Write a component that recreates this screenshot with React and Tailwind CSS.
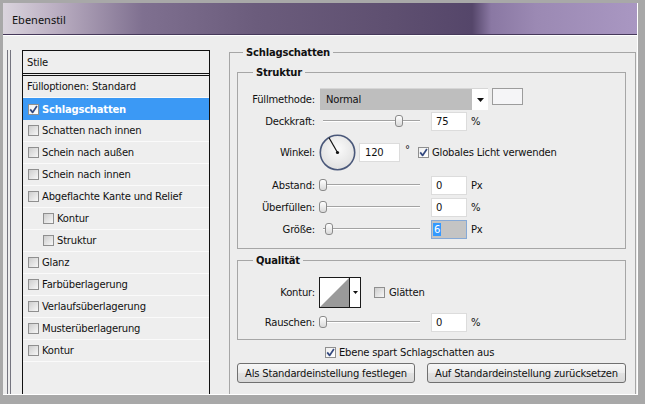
import React from "react";

const Check = ({ checked }) => (
  <span
    className={
      checked
        ? "flex w-[11px] h-[11px] shrink-0 items-center justify-center border border-[#8f8f8f] bg-[linear-gradient(135deg,#f0f0f0,#ffffff)]"
        : "flex w-[11px] h-[11px] shrink-0 items-center justify-center border border-[#8f8f8f] bg-[linear-gradient(135deg,#cdcdcd,#f7f7f7)]"
    }
  >
    {checked && (
      <svg width="9" height="9" viewBox="0 0 9 9">
        <path d="M1.2 4.4 L3.6 7.4 L7.9 1.1" fill="none" stroke="#34497f" strokeWidth="1.7" strokeLinejoin="round" />
      </svg>
    )}
  </span>
);

const Slider = ({ pos }) => (
  <div className="relative w-[104px] h-[14px] shrink-0">
    <div className="absolute left-[3px] right-[4px] top-[6px] h-[2px] border-t border-[#a3a3a3] border-b border-b-white" />
    <div
      className="absolute top-[1px] w-[8px] h-[12px] rounded-[3px] border border-[#8a8a8a] bg-[linear-gradient(#ffffff,#d9d9d9)]"
      style={{ left: pos }}
    />
  </div>
);

const Input = ({ v, wide }) => (
  <div
    className={
      wide
        ? "w-[41px] h-[19px] shrink-0 bg-white border border-[#dcdcdc] flex items-center pl-[5px]"
        : "w-[36px] h-[19px] shrink-0 bg-white border border-[#dcdcdc] flex items-center pl-[4px]"
    }
  >
    {v}
  </div>
);

const Label = ({ children }) => <div className="w-[77px] shrink-0 text-right">{children}</div>;

const SliderRow = ({ label, pos, value, unit, mt }) => (
  <div className={"h-[20px] flex items-center " + mt}>
    <Label>{label}</Label>
    <div className="ml-[5px]">
      <Slider pos={pos} />
    </div>
    <div className="ml-[7px]">
      <Input v={value} />
    </div>
    <div className="ml-[4px]">{unit}</div>
  </div>
);

const items = [
  { t: "Schatten nach innen" },
  { t: "Schein nach außen" },
  { t: "Schein nach innen" },
  { t: "Abgeflachte Kante und Relief" },
  { t: "Kontur", i: true },
  { t: "Struktur", i: true },
  { t: "Glanz" },
  { t: "Farbüberlagerung" },
  { t: "Verlaufsüberlagerung" },
  { t: "Musterüberlagerung" },
  { t: "Kontur" },
];

export default function App() {
  return (
    <div className="w-[645px] h-[404px] bg-[#a8a8a8] pt-[3px] pl-[3px] overflow-hidden font-['DejaVu_Sans',sans-serif] text-[10px] leading-[13px] tracking-[-0.2px] text-[#111]">
      <div className="w-[635px] h-[392px] border-r border-b border-white flex flex-col">
        <div className="h-[32px] shrink-0 border-b border-[#46395a] bg-[linear-gradient(90deg,#dad4dd_0%,#bcb0c3_8%,#7f7090_22%,#6b5c7c_40%,#5e4f70_62%,#55466a_74%,#8a78a3_77%,#9b89b3_84%,#a997c2_100%)] flex items-center pl-[9px] pt-[2px] font-['Noto_Sans',sans-serif] text-[11px] tracking-normal text-[#111]">
          Ebenenstil
        </div>
        <div className="flex-1 min-h-0 border-t border-white bg-[#ededed] flex">
          <div className="w-[19px] shrink-0 flex pt-[14px]">
            <div className="ml-[4px] w-[1px] bg-[#74747e]" />
            <div className="ml-[2px] w-[1px] bg-[#74747e]" />
          </div>

          <div className="mt-[14px] w-[188px] shrink-0 border-x border-t border-[#111] bg-[#eeeeee]">
            <div className="h-[25px] border-b-[3px] border-double border-[#111] pl-[4px] flex items-center">Stile</div>
            <div className="h-[22px] flex items-center border-b border-[#fafafa] pl-[4px]">Fülloptionen: Standard</div>
            <div className="h-[22px] flex items-center bg-[#3b99f5] pl-[5px]">
              <Check checked />
              <span className="ml-[3px] font-bold text-white">Schlagschatten</span>
            </div>
            {items.map((it, k) => (
              <div
                key={k}
                className={
                  it.i
                    ? "h-[22px] flex items-center border-b border-[#fafafa] pl-[20px]"
                    : "h-[22px] flex items-center border-b border-[#fafafa] pl-[5px]"
                }
              >
                <Check />
                <span className="ml-[3px]">{it.t}</span>
              </div>
            ))}
          </div>

          <div className="ml-[19px] mt-[16px] w-[407px] shrink-0 border-x border-t border-[#a6a6a6] flex flex-col">
            <div className="-mt-[7px] ml-[13px] w-fit px-[3px] bg-[#ededed] font-bold h-[13px]">Schlagschatten</div>

            <div className="mt-[13px] ml-[7px] w-[389px] border border-[#a6a6a6] pb-[9px]">
              <div className="-mt-[7px] ml-[15px] w-fit px-[3px] bg-[#ededed] font-bold h-[13px]">Struktur</div>

              <div className="mt-[9px] h-[22px] flex items-center">
                <Label>Füllmethode:</Label>
                <div className="ml-[5px] w-[168px] h-[22px] flex bg-[#bebebe] border-t border-[#d6d6d6]">
                  <div className="flex-1 flex items-center pl-[6px]">Normal</div>
                  <div className="w-[16px] bg-white flex items-center justify-center">
                    <svg width="7" height="4" viewBox="0 0 7 4">
                      <polygon points="0,0 7,0 3.5,4" fill="#111" />
                    </svg>
                  </div>
                </div>
                <div className="ml-[4px] w-[31px] h-[17px] self-start border border-[#9c9c9c] bg-[#f5f5f7]" />
              </div>

              <SliderRow label="Deckkraft:" pos={75} value="75" unit="%" mt="mt-[1px]" />

              <div className="mt-[3px] h-[37px] flex items-center">
                <Label>Winkel:</Label>
                <div className="ml-[4px]">
                  <svg width="37" height="37" viewBox="0 0 37 37">
                    <defs>
                      <radialGradient id="dial" cx="50%" cy="40%" r="60%">
                        <stop offset="0" stopColor="#fbfbfb" />
                        <stop offset="1" stopColor="#e0e0e0" />
                      </radialGradient>
                    </defs>
                    <circle cx="18.5" cy="18.5" r="17.2" fill="url(#dial)" stroke="#4a587a" strokeWidth="1.6" />
                    <line x1="18.5" y1="18.5" x2="10" y2="3.8" stroke="#111" strokeWidth="1.2" />
                    <circle cx="18.5" cy="18.5" r="1.6" fill="#111" />
                  </svg>
                </div>
                <div className="ml-[3px]">
                  <Input v="120" wide />
                </div>
                <div className="ml-[5px] w-[6px] self-start mt-[9px]">°</div>
                <div className="ml-[7px]">
                  <Check checked />
                </div>
                <div className="ml-[3px]">Globales Licht verwenden</div>
              </div>

              <SliderRow label="Abstand:" pos={-1} value="0" unit="Px" mt="mt-[4px]" />
              <SliderRow label="Überfüllen:" pos={-1} value="0" unit="%" mt="mt-[2px]" />

              <div className="mt-[2px] h-[20px] flex items-center">
                <Label>Größe:</Label>
                <div className="ml-[5px]">
                  <Slider pos={5} />
                </div>
                <div className="ml-[7px] w-[36px] h-[19px] shrink-0 bg-[#c4c4c4] border border-[#86a9d6] flex items-center pl-[1px]">
                  <span className="w-[8px] h-[13px] bg-[#3399ff] text-white flex items-center justify-center">6</span>
                </div>
                <div className="ml-[4px]">Px</div>
              </div>
            </div>

            <div className="mt-[11px] ml-[7px] w-[389px] border border-[#a6a6a6] pb-[7px]">
              <div className="-mt-[7px] ml-[15px] w-fit px-[3px] bg-[#ededed] font-bold h-[13px]">Qualität</div>

              <div className="mt-[10px] h-[31px] flex items-center">
                <Label>Kontur:</Label>
                <div className="ml-[4px] w-[42px] h-[31px] border border-[#1a1a1a] flex bg-white">
                  <svg width="29" height="29" viewBox="0 0 29 29">
                    <polygon points="0,29 29,0 29,29" fill="#9a9a9a" />
                  </svg>
                  <div className="w-[11px] border-l border-[#1a1a1a] flex items-center justify-center">
                    <svg width="5" height="3" viewBox="0 0 5 3">
                      <polygon points="0,0 5,0 2.5,3" fill="#111" />
                    </svg>
                  </div>
                </div>
                <div className="ml-[13px]">
                  <Check />
                </div>
                <div className="ml-[4px]">Glätten</div>
              </div>

              <SliderRow label="Rauschen:" pos={-1} value="0" unit="%" mt="mt-[4px]" />
            </div>

            <div className="mt-[2px] h-[20px] flex items-center pl-[95px]">
              <Check checked />
              <span className="ml-[3px]">Ebene spart Schlagschatten aus</span>
            </div>

            <div className="mt-[1px] flex gap-[12px] pl-[7px]">
              <button className="w-[178px] h-[20px] rounded-[3px] border border-[#707070] bg-[linear-gradient(#f7f7f7,#ececec_50%,#e2e2e2_51%,#d8d8d8)]">
                Als Standardeinstellung festlegen
              </button>
              <button className="w-[199px] h-[20px] rounded-[3px] border border-[#707070] bg-[linear-gradient(#f7f7f7,#ececec_50%,#e2e2e2_51%,#d8d8d8)]">
                Auf Standardeinstellung zurücksetzen
              </button>
            </div>
          </div>
        </div>
      </div>
    </div>
  );
}
